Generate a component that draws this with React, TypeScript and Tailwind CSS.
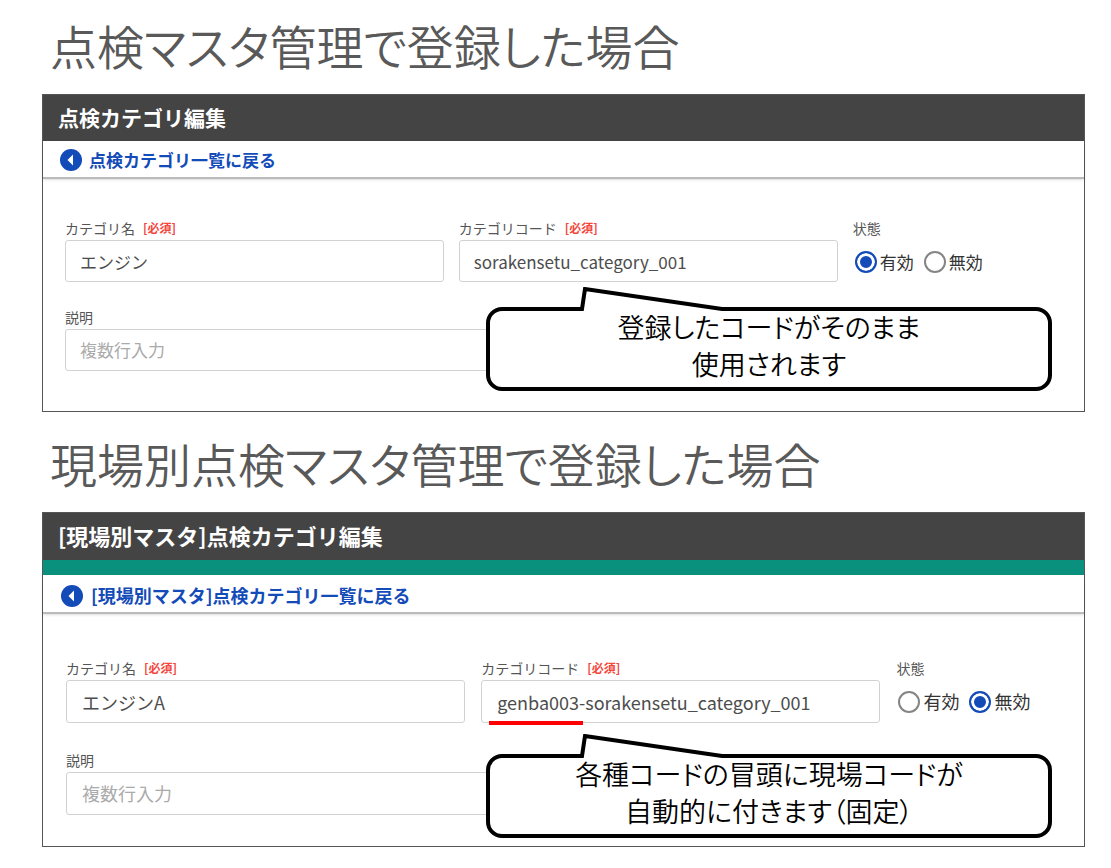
import clsx from "clsx";
import { useId } from "react";

type PanelProps = {
    title: string;
    backLabel: string;
    name: string;
    code: string;
    enabled: boolean;
    callout: string[];
    siteSpecific?: boolean;
};

function Label({
    htmlFor,
    required,
    children,
}: {
    htmlFor?: string;
    required?: boolean;
    children: string;
}) {
    return (
        <label
            htmlFor={htmlFor}
            className="mb-1 flex items-center gap-2 text-[14px] leading-4 text-[#555]"
        >
            {children}
            {required && (
                <span className="text-xs leading-4 font-bold text-[#f4473c]">
                    [必須]
                </span>
            )}
        </label>
    );
}

function Radio({
    name,
    label,
    defaultChecked,
}: {
    name: string;
    label: string;
    defaultChecked: boolean;
}) {
    return (
        <label className="flex items-center gap-[3px]">
            <input
                type="radio"
                name={name}
                defaultChecked={defaultChecked}
                className="size-[22px] appearance-none rounded-full border-2 border-[#858585] bg-white checked:border-[#134bb8] checked:bg-[#134bb8] checked:shadow-[inset_0_0_0_3px_white]"
            />
            {label}
        </label>
    );
}

function Callout({ lines, low }: { lines: string[]; low?: boolean }) {
    return (
        <div
            className={clsx(
                "absolute right-8 left-[443px] h-[84px] rounded-[16px] border-4 border-black bg-white text-center text-[27px] leading-[37px] font-[350] text-black [font-feature-settings:'palt']",
                low ? "bottom-2" : "bottom-5",
            )}
        >
            <svg
                viewBox="0 0 160 26"
                aria-hidden="true"
                className="absolute -top-6 left-[86px] h-[26px] w-[160px]"
            >
                <path d="M6 26V22L9 2L146 22V26Z" fill="white" />
                <path
                    d="M0 22H6L9 2L146 22H160"
                    fill="none"
                    stroke="black"
                    strokeWidth="4"
                />
            </svg>
            <div className="relative -mt-[3px]">
                {lines.map((line) => (
                    <p key={line}>{line}</p>
                ))}
            </div>
        </div>
    );
}

function Panel({
    title,
    backLabel,
    name,
    code,
    enabled,
    callout,
    siteSpecific,
}: PanelProps) {
    const id = useId();
    const field = clsx(
        "block w-full resize-none rounded-[3px] border border-[#d2d2d2] bg-white text-[#4d4d4d] placeholder:text-[#aaa]",
        siteSpecific ? "h-[43px] px-[15px]" : "h-[42px] px-[14px]",
    );

    return (
        <div className="relative border border-[#555] bg-white">
            <h2
                className={clsx(
                    "bg-[#444] px-[15px] leading-[44px] font-bold text-white",
                    siteSpecific ? "pb-[3px] text-[22px]" : "pb-[2px] text-[21px]",
                )}
            >
                {title}
            </h2>
            {siteSpecific && <div className="h-[15px] bg-[#0a917d]" />}
            <div
                className={clsx(
                    "border-b-2 border-[#bbb] shadow-sm",
                    siteSpecific ? "px-[18px]" : "px-[17px]",
                )}
            >
                <a
                    href="#"
                    className={clsx(
                        "flex items-center font-bold text-[#134bb8]",
                        siteSpecific
                            ? "h-[37px] gap-2 pt-1 text-[18px]"
                            : "h-[36px] gap-[7px] pt-0.5 text-[17px]",
                    )}
                >
                    <svg viewBox="0 0 22 22" aria-hidden="true" className="size-[22px]">
                        <circle cx="11" cy="11" r="11" fill="#134bb8" />
                        <path d="M7.5 11L13 5.5V16.5Z" fill="white" />
                    </svg>
                    {backLabel}
                </a>
            </div>
            <form
                className={clsx(
                    "grid pr-[22px]",
                    siteSpecific
                        ? "grid-cols-[41fr_41fr_17fr] gap-x-4 gap-y-[29px] pt-[46px] pb-[31px] pl-[23px] text-[18px]"
                        : "grid-cols-[38fr_38fr_21fr] gap-x-[15px] gap-y-[26px] pt-[41px] pb-[40px] pl-[22px] text-[17px]",
                )}
            >
                <div>
                    <Label htmlFor={`${id}-name`} required>
                        カテゴリ名
                    </Label>
                    <input id={`${id}-name`} defaultValue={name} className={field} />
                </div>
                <div className="relative">
                    <Label htmlFor={`${id}-code`} required>
                        カテゴリコード
                    </Label>
                    <input id={`${id}-code`} defaultValue={code} className={field} />
                    {siteSpecific && (
                        <div className="absolute -bottom-0.5 left-2 h-1 w-[94px] bg-[#f00]" />
                    )}
                </div>
                <div role="radiogroup" aria-label="状態">
                    <Label>状態</Label>
                    <div className="flex h-[43px] items-center gap-[10px] pl-0.5 text-[#333]">
                        <Radio name={`${id}-state`} label="有効" defaultChecked={enabled} />
                        <Radio name={`${id}-state`} label="無効" defaultChecked={!enabled} />
                    </div>
                </div>
                <div className="col-span-2">
                    <Label htmlFor={`${id}-description`}>説明</Label>
                    <textarea
                        id={`${id}-description`}
                        placeholder="複数行入力"
                        className={clsx(field, "leading-[40px]")}
                    />
                </div>
            </form>
            <Callout lines={callout} low={siteSpecific} />
        </div>
    );
}

function Heading({ children }: { children: string }) {
    return (
        <h1 className="mb-[19px] pl-2 text-[47px] leading-[60px] font-[350] text-[#595959] [font-feature-settings:'palt']">
            {children}
        </h1>
    );
}

export default function App() {
    return (
        <main className="flex flex-col gap-[21px] bg-white pt-[15px] pr-[26px] pb-5 pl-[42px] font-['Noto_Sans_CJK_JP',sans-serif]">
            <section>
                <Heading>点検マスタ管理で登録した場合</Heading>
                <Panel
                    title="点検カテゴリ編集"
                    backLabel="点検カテゴリ一覧に戻る"
                    name="エンジン"
                    code="sorakensetu_category_001"
                    enabled
                    callout={["登録したコードがそのまま", "使用されます"]}
                />
            </section>
            <section>
                <Heading>現場別点検マスタ管理で登録した場合</Heading>
                <Panel
                    title="[現場別マスタ]点検カテゴリ編集"
                    backLabel="[現場別マスタ]点検カテゴリ一覧に戻る"
                    name="エンジンA"
                    code="genba003-sorakensetu_category_001"
                    enabled={false}
                    callout={["各種コードの冒頭に現場コードが", "自動的に付きます（固定）"]}
                    siteSpecific
                />
            </section>
        </main>
    );
}
